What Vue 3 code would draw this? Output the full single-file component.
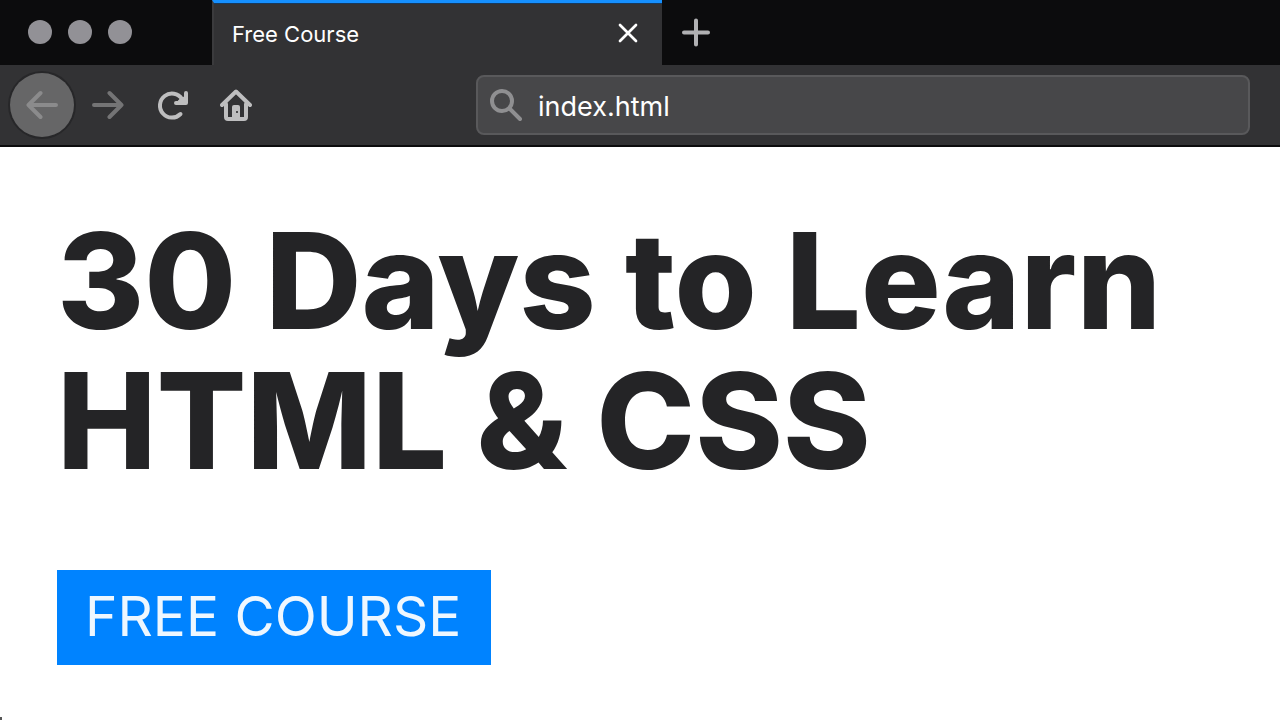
<script setup>
import { ref } from 'vue'

const address = ref('index.html')
</script>

<template>
  <div class="browser">
    <header class="chrome">
      <div class="tab-strip">
        <div class="window-controls">
          <button class="dot" type="button" aria-label="Close window"></button>
          <button class="dot" type="button" aria-label="Minimize window"></button>
          <button class="dot" type="button" aria-label="Zoom window"></button>
        </div>
        <div class="tab">
          <span class="tab-title">Free Course</span>
          <button class="icon-button tab-close" type="button" aria-label="Close tab">
            <svg width="24" height="24" viewBox="0 0 24 24" stroke="#fff" stroke-width="2.7" stroke-linecap="round">
              <path d="M4 3 20 19M20 3 4 19" />
            </svg>
          </button>
        </div>
        <button class="icon-button new-tab" type="button" aria-label="New tab">
          <svg width="32" height="32" viewBox="0 0 32 32" stroke="#b1b1b3" stroke-width="4" stroke-linecap="round">
            <path d="M4 15.500H28M16 3.500V27.500" />
          </svg>
        </button>
      </div>

      <nav class="toolbar" aria-label="Navigation">
        <button class="icon-button back" type="button" aria-label="Back">
          <svg width="32" height="32" viewBox="0 0 32 32" fill="none" stroke="#8b8b8c" stroke-width="4" stroke-linecap="round" stroke-linejoin="round">
            <path d="M30 16H2.500M14.500 4 2.500 16l12 12" />
          </svg>
        </button>
        <button class="icon-button" type="button" aria-label="Forward">
          <svg width="32" height="32" viewBox="0 0 32 32" fill="none" stroke="#747475" stroke-width="4" stroke-linecap="round" stroke-linejoin="round">
            <path d="M2 16H29.500M17.500 4l12 12-12 12" />
          </svg>
        </button>
        <button class="icon-button" type="button" aria-label="Reload">
          <svg width="32" height="32" viewBox="0 0 32 32" fill="none" stroke="#bebebf" stroke-width="4" stroke-linecap="round" stroke-linejoin="round">
            <path d="M24.500 25A12 12 0 1 1 26 10" />
            <path d="M30 4V14H20" />
            <path d="M23 11 28 8V13H22Z" fill="#bebebf" stroke-width="1" />
          </svg>
        </button>
        <button class="icon-button" type="button" aria-label="Home">
          <svg width="32" height="32" viewBox="0 0 32 32" fill="none" stroke="#bebebf" stroke-width="4" stroke-linecap="round" stroke-linejoin="round">
            <path d="M2 16 16 2.500 30 16" />
            <path d="M6 15V28a2 2 0 0 0 2 2H24a2 2 0 0 0 2-2V15" />
            <path d="M12 30V18a2 2 0 0 1 2-2h4a2 2 0 0 1 2 2V30Z" fill="#bebebf" stroke="none" />
            <path d="M16 22h2v2h-2z" fill="#4a4a4c" stroke="none" />
          </svg>
        </button>
        <label class="address-bar">
          <svg width="34" height="34" viewBox="0 0 34 34" fill="none" stroke="#8f8f91" stroke-width="4" stroke-linecap="round">
            <circle cx="14" cy="13" r="10" />
            <path d="M21.500 20.500 32 31" />
          </svg>
          <input v-model="address" type="text" aria-label="Address" spellcheck="false" />
        </label>
      </nav>
    </header>

    <main class="page">
      <h1>30 Days to Learn<br />HTML &amp; CSS</h1>
      <a class="badge" href="#">FREE COURSE</a>
    </main>
  </div>
</template>

<style>
body {
  margin: 0;
  background: #fff;
}
</style>

<style scoped>
.browser {
  position: relative;
  box-sizing: border-box;
  min-height: 100vh;
  font-family: Inter, "Liberation Sans", sans-serif;
}

.browser::after {
  content: "";
  position: absolute;
  left: 0;
  bottom: 0;
  width: 2px;
  height: 3px;
  background: #555;
}

.chrome {
  background: #323234;
  border-bottom: 2px solid #0c0c0d;
}

button {
  padding: 0;
  border: 0;
  background: none;
}

.tab-strip {
  display: flex;
  height: 65px;
  background: #0c0c0d;
}

.window-controls {
  display: flex;
  align-items: center;
  gap: 16px;
  width: 184px;
  height: 64px;
  padding-left: 28px;
}

.dot {
  width: 24px;
  height: 24px;
  border-radius: 50%;
  background: #929196;
}

.tab {
  box-sizing: border-box;
  display: flex;
  align-items: center;
  justify-content: space-between;
  width: 450px;
  padding: 0 22px 0 18px;
  border-top: 3px solid #1590ff;
  border-left: 2px solid #3b3b3d;
  background: #323234;
  box-shadow: inset 0 1px #17395c;
}

.tab-title {
  color: #fff;
  font-size: 22px;
  line-height: 28px;
}

.icon-button {
  display: flex;
  align-items: center;
  justify-content: center;
}

.new-tab {
  margin-left: 18px;
}

.toolbar {
  display: flex;
  align-items: center;
  gap: 32px;
  height: 80px;
  padding: 0 30px 0 10px;
}

.back {
  width: 64px;
  height: 64px;
  margin-right: -14px;
  border-radius: 50%;
  background: #666667;
  box-shadow: 0 0 0 2px #272729;
}

.address-bar {
  box-sizing: border-box;
  display: flex;
  flex: 1;
  align-items: center;
  gap: 16px;
  height: 60px;
  margin-left: 192px;
  padding: 0 10px;
  border: 2px solid #59595b;
  border-radius: 8px;
  background: #474749;
}

.address-bar input {
  flex: 1;
  min-width: 0;
  padding: 4px 0 0;
  border: 0;
  outline: 0;
  background: none;
  color: #fff;
  font: 27px/36px Inter, "Liberation Sans", sans-serif;
}

.page {
  padding: 64px 57px 55px;
}

h1 {
  margin: 0 0 79px;
  color: #242426;
  font-size: 133px;
  font-weight: 800;
  line-height: 140px;
  white-space: nowrap;
}

.badge {
  display: inline-block;
  padding: 0 30px 3px 28px;
  background: #0083ff;
  color: #eef7ff;
  font-size: 55px;
  font-weight: 400;
  line-height: 92px;
  text-decoration: none;
}
</style>
